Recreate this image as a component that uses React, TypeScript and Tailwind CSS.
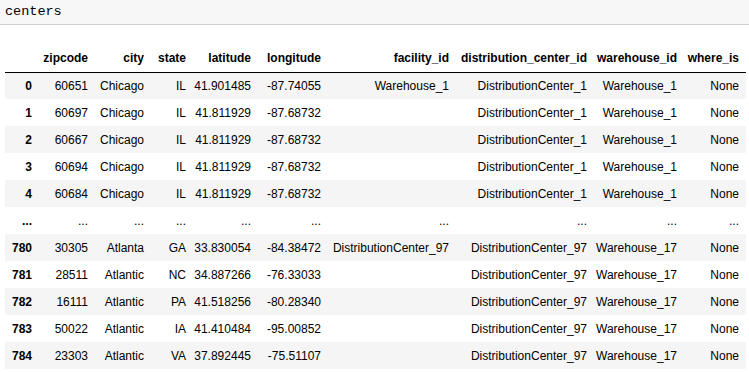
import React from "react";

type Row = string[];

const columns = [
  { name: "", w: "w-[34px]" },
  { name: "zipcode", w: "w-[56px]" },
  { name: "city", w: "w-[56px]" },
  { name: "state", w: "w-[42px]" },
  { name: "latitude", w: "w-[65px]" },
  { name: "longitude", w: "w-[70px]" },
  { name: "facility_id", w: "w-[128px]" },
  { name: "distribution_center_id", w: "w-[138px]" },
  { name: "warehouse_id", w: "w-[90px]" },
  { name: "where_is", w: "w-[62px]" },
];

const rows: Row[] = [
  ["0", "60651", "Chicago", "IL", "41.901485", "-87.74055", "Warehouse_1", "DistributionCenter_1", "Warehouse_1", "None"],
  ["1", "60697", "Chicago", "IL", "41.811929", "-87.68732", "", "DistributionCenter_1", "Warehouse_1", "None"],
  ["2", "60667", "Chicago", "IL", "41.811929", "-87.68732", "", "DistributionCenter_1", "Warehouse_1", "None"],
  ["3", "60694", "Chicago", "IL", "41.811929", "-87.68732", "", "DistributionCenter_1", "Warehouse_1", "None"],
  ["4", "60684", "Chicago", "IL", "41.811929", "-87.68732", "", "DistributionCenter_1", "Warehouse_1", "None"],
  ["...", "...", "...", "...", "...", "...", "...", "...", "...", "..."],
  ["780", "30305", "Atlanta", "GA", "33.830054", "-84.38472", "DistributionCenter_97", "DistributionCenter_97", "Warehouse_17", "None"],
  ["781", "28511", "Atlantic", "NC", "34.887266", "-76.33033", "", "DistributionCenter_97", "Warehouse_17", "None"],
  ["782", "16111", "Atlantic", "PA", "41.518256", "-80.28340", "", "DistributionCenter_97", "Warehouse_17", "None"],
  ["783", "50022", "Atlantic", "IA", "41.410484", "-95.00852", "", "DistributionCenter_97", "Warehouse_17", "None"],
  ["784", "23303", "Atlantic", "VA", "37.892445", "-75.51107", "", "DistributionCenter_97", "Warehouse_17", "None"],
];

export default function App() {
  return (
    <div className="w-[749px] h-[372px] bg-white overflow-hidden text-black">
      <div className="h-[25px] bg-[#f7f7f7] border-b border-[#cfcfcf] pl-[5px] flex items-center">
        <span className="font-['Liberation_Mono',monospace] text-[13.5px] leading-none">centers</span>
      </div>

      <div className="pt-[20px] pl-[5px]">
        <table className="table-fixed border-collapse w-[741px] font-['Liberation_Sans',Arial,sans-serif] text-[12px]">
          <thead className="border-b border-black">
            <tr className="h-[27px]">
              {columns.map((c, i) => (
                <th key={i} className={`${c.w} text-right font-bold pr-[7px] pl-0 whitespace-nowrap`}>
                  {c.name}
                </th>
              ))}
            </tr>
          </thead>
          <tbody>
            {rows.map((r, ri) => (
              <tr key={ri} className={`h-[27px] ${ri % 2 === 0 ? "bg-[#f5f5f5]" : "bg-white"}`}>
                {r.map((cell, ci) => (
                  <td
                    key={ci}
                    className={`text-right pr-[7px] pl-0 whitespace-nowrap ${ci === 0 ? "font-bold" : ""}`}
                  >
                    {cell}
                  </td>
                ))}
              </tr>
            ))}
          </tbody>
        </table>
      </div>
    </div>
  );
}
